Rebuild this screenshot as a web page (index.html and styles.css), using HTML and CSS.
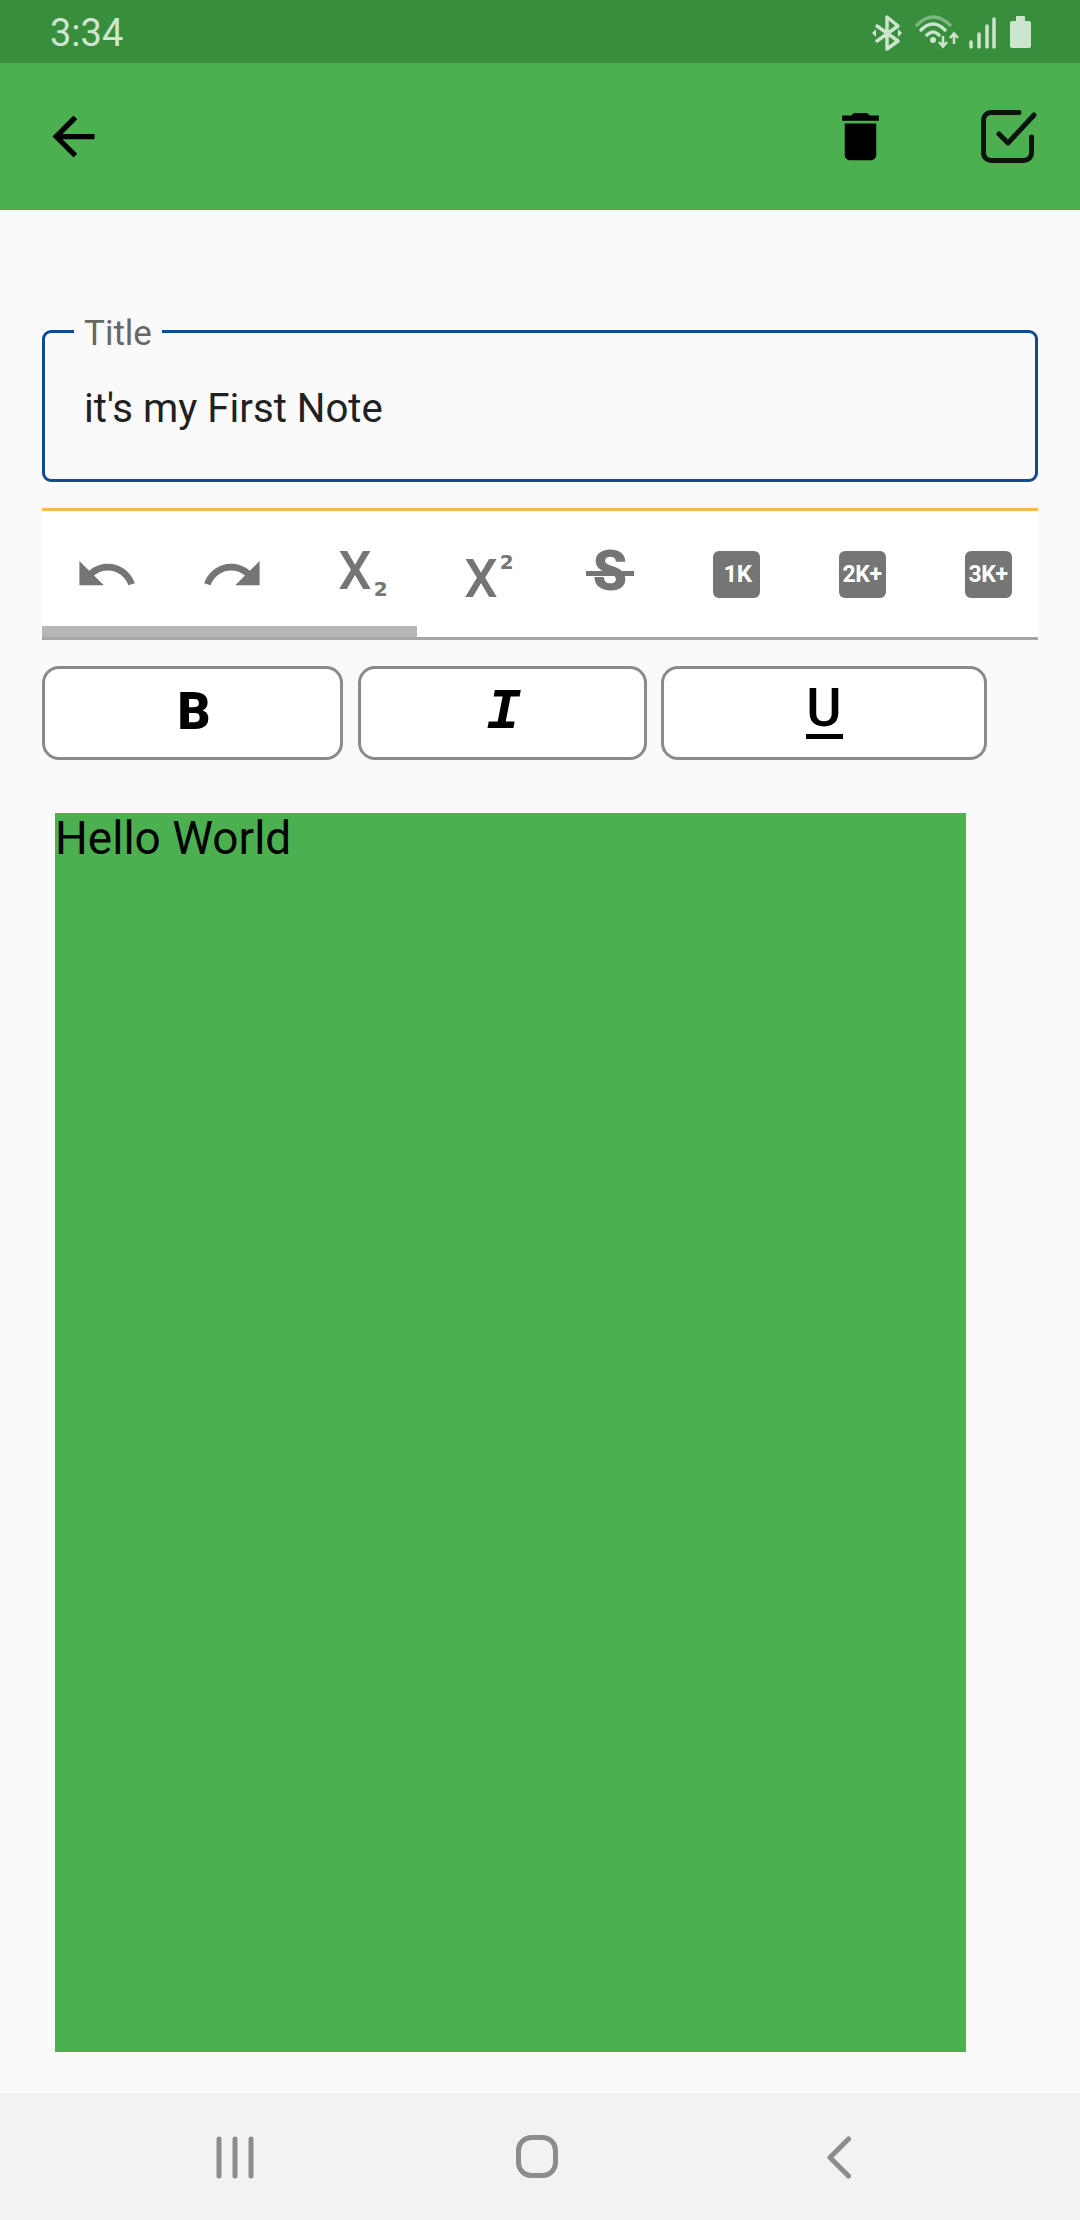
FILE: index.html
```html
<!DOCTYPE html>
<html lang="en">
<head>
<meta charset="utf-8">
<title>Note editor</title>
<link rel="stylesheet" href="styles.css">
</head>
<body>
<header class="status-bar">
  <span class="time">3:34</span>
  <svg class="status-icons" viewBox="865 10 170 40" width="170" height="40">
    <path class="st-line" d="M877 24L898 39L887 47V15L898 24L877 39"/>
    <path class="st-fill" d="M872 31l4-4v8zM902 31l-4-4v8z"/>
    <path class="st-faint" d="M917 23Q933 7 950 23"/>
    <path class="st-line" d="M921 28Q933 16 945 28M927 33Q933 27 939 33"/>
    <circle class="st-fill" cx="933" cy="38" r="3"/>
    <path class="st-arrow" d="M943 34V44M939 40L943 44.500L947 40M954 42V32M950 36L954 31.500L958 36"/>
    <path class="st-bar" d="M971 40V45M979 32V45M987 24V45M994 17V45"/>
    <path class="st-fill" d="M1016 15a1 1 0 0 1 1-1h7a1 1 0 0 1 1 1v4h4a2 2 0 0 1 2 2v23a2 2 0 0 1-2 2h-17a2 2 0 0 1-2-2V21a2 2 0 0 1 2-2h4z"/>
  </svg>
</header>

<nav class="app-bar">
  <svg class="bar-icon" viewBox="0 0 24 24"><path d="M20 11H7.830l5.590-5.590L12 4l-8 8 8 8 1.410-1.410L7.830 13H20v-2z"/></svg>
  <svg class="bar-icon trash" viewBox="0 0 24 24"><path d="M6 19c0 1.100.9 2 2 2h8c1.100 0 2-.9 2-2V7H6v12zM19 4h-3.500l-1-1h-5l-1 1H5v2h14V4z"/></svg>
  <svg class="check-icon" viewBox="0 0 64 64"><path d="M43 7.500H15a7.500 7.500 0 0 0-7.500 7.500v33a7.500 7.500 0 0 0 7.500 7.500h33a7.500 7.500 0 0 0 7.500-7.500V32"/><path d="M23 29l9 9 26-28"/></svg>
</nav>

<main class="content">
  <div class="title-field">
    <span class="title-label">Title</span>
    <span class="title-value">it's my First Note</span>
  </div>

  <div class="toolbar">
    <div class="tool"><svg class="tool-icon" viewBox="0 0 24 24"><path d="M12.500 8c-2.650 0-5.050.99-6.900 2.600L2 7v9h9l-3.620-3.620c1.390-1.160 3.160-1.880 5.120-1.880 3.540 0 6.550 2.310 7.600 5.500l2.370-.78C21.080 11.030 17.150 8 12.500 8z"/></svg></div>
    <div class="tool"><svg class="tool-icon" viewBox="0 0 24 24"><path d="M18.400 10.600C16.550 8.990 14.150 8 11.500 8c-4.650 0-8.580 3.030-9.960 7.220L3.900 16c1.050-3.190 4.050-5.500 7.600-5.500 1.950 0 3.730.72 5.120 1.880L13 16h9V7l-3.600 3.600z"/></svg></div>
    <div class="tool"><span class="script sub-form">X<small class="script-digit">2</small></span></div>
    <div class="tool"><span class="script sup-form">X<small class="script-digit">2</small></span></div>
    <div class="tool"><span class="strike">S</span></div>
    <div class="tool"><span class="badge badge-one">1K</span></div>
    <div class="tool"><span class="badge">2K+</span></div>
    <div class="tool"><span class="badge">3K+</span></div>
    <div class="scroll-thumb"></div>
  </div>

  <div class="format-row">
    <button class="format-btn btn-bold">B</button>
    <button class="format-btn btn-italic">I</button>
    <button class="format-btn btn-underline"><span class="u-mark">U</span></button>
  </div>

  <div class="editor">Hello World</div>
</main>

<footer class="nav-bar">
  <svg class="nav-icon" viewBox="0 0 60 44"><path d="M14 4V41M30 4V41M46 4V41"/></svg>
  <svg class="nav-icon" viewBox="0 0 60 44"><rect x="11.500" y="2.500" width="37" height="38" rx="13"/></svg>
  <svg class="nav-icon" viewBox="0 0 60 44"><path d="M39.500 4L21 22.500L39.500 41" class="nav-chevron"/></svg>
</footer>
</body>
</html>
```

FILE: styles.css
```css
* { box-sizing: border-box; }

html, body {
  margin: 0;
  height: 2220px;
  overflow: hidden;
}

body {
  display: flex;
  flex-direction: column;
  background: #fafafa;
  font-family: Roboto, "Liberation Sans", sans-serif;
}

.status-bar {
  flex: none;
  height: 63px;
  display: flex;
  align-items: center;
  padding: 0 45px 0 50px;
  background: #388e3c;
}

.time {
  font-size: 38px;
  line-height: 1;
  color: #cfe6d0;
  position: relative;
  top: 1px;
}

.status-icons {
  margin-left: auto;
  display: block;
}

.st-line, .st-faint, .st-arrow, .st-bar {
  fill: none;
  stroke: #cde4cf;
}
.st-line { stroke-width: 3.500; stroke-linecap: round; stroke-linejoin: round; }
.st-faint { stroke-width: 3.500; stroke: #7db880; stroke-linecap: round; }
.st-arrow { stroke-width: 2.500; }
.st-bar { stroke-width: 3.500; stroke-linecap: round; }
.st-fill { fill: #cde4cf; }

.app-bar {
  flex: none;
  height: 147px;
  display: flex;
  align-items: center;
  padding: 0 40px 0 42px;
  background: #4caf50;
}

.bar-icon {
  width: 63px;
  height: 63px;
  display: block;
  fill: #000;
}

.trash { margin-left: auto; }

.check-icon {
  width: 64px;
  height: 64px;
  margin-left: 84px;
  display: block;
  fill: none;
  stroke: #0b130d;
  stroke-width: 5;
  stroke-linecap: round;
  stroke-linejoin: round;
}

.content {
  flex: 1;
  padding: 120px 42px 0;
  display: flex;
  flex-direction: column;
}

.title-field {
  position: relative;
  height: 152px;
  display: flex;
  align-items: center;
  padding: 5px 0 0 39px;
  border: 3px solid #134a94;
  border-radius: 9px;
}

.title-label {
  position: absolute;
  left: 29px;
  top: -19px;
  padding: 0 10px;
  background: #fafafa;
  font-size: 35px;
  line-height: 40px;
  color: #666;
}

.title-value {
  font-size: 40.200px;
  color: #212121;
}

.toolbar {
  position: relative;
  margin-top: 26px;
  height: 132px;
  display: flex;
  overflow: hidden;
  padding-left: 1px;
  background: #fff;
  border-top: 3px solid #f4b94c;
  border-bottom: 3px solid #a5a5a5;
}

.tool {
  flex: none;
  width: 126px;
  height: 126px;
  display: flex;
  align-items: center;
  justify-content: center;
}

.tool-icon {
  width: 65px;
  height: 65px;
  display: block;
  fill: #757575;
}

.script {
  display: flex;
  font-size: 53px;
  font-weight: 500;
  line-height: 37px;
  color: #757575;
}

.script-digit {
  font-family: "DejaVu Sans", sans-serif;
  font-size: 20px;
  font-weight: 700;
  line-height: 13px;
  margin-left: 2px;
}

.sub-form { margin-top: -6px; margin-left: 10px; }
.sub-form .script-digit { position: relative; top: 30px; }
.sup-form { margin-top: 10px; margin-left: 10px; }
.sup-form .script-digit { position: relative; top: -5px; }

.strike {
  position: relative;
  font-size: 55px;
  font-weight: 900;
  line-height: 40px;
  color: #757575;
  margin-top: -7px;
}

.strike::after {
  content: "";
  position: absolute;
  left: -7px;
  right: -7px;
  top: 20px;
  height: 5px;
  background: #757575;
}

.badge {
  width: 47px;
  height: 47px;
  display: flex;
  align-items: center;
  justify-content: center;
  border-radius: 6px;
  background: #757575;
  color: #fff;
  font-size: 23px;
  font-weight: 700;
  letter-spacing: -0.5px;
  white-space: nowrap;
}

.badge-one {
  font-size: 24px;
  padding-left: 3px;
}

.scroll-thumb {
  position: absolute;
  left: 0;
  bottom: 0;
  width: 375px;
  height: 11px;
  background: #b6b6b6;
}

.format-row {
  margin-top: 26px;
  display: flex;
  gap: 15px;
}

.format-btn {
  height: 94px;
  padding: 0;
  display: flex;
  align-items: center;
  justify-content: center;
  background: #fff;
  border: 3px solid #8a8a8a;
  border-radius: 17px;
  color: #000;
  font-family: Roboto, sans-serif;
  font-size: 53px;
  line-height: 1;
}

.btn-bold {
  width: 301px;
  padding: 0 0 3px 3px;
  font-size: 51px;
  font-weight: 900;
}
.btn-italic {
  width: 289px;
  padding-left: 2px;
  font-family: "Liberation Mono", monospace;
  font-size: 58px;
  font-style: italic;
  font-weight: 700;
}
.btn-underline {
  width: 326px;
  margin-left: -1px;
  font-weight: 500;
}

.u-mark {
  display: block;
  width: 37px;
  height: 49px;
  font-size: 54px;
  line-height: 36px;
  text-align: center;
  border-bottom: 5px solid #000;
  margin-top: 2px;
}

.editor {
  margin: 53px 0 41px 13px;
  width: 911px;
  flex: 1;
  background: #4caf50;
  color: #000;
  font-size: 46px;
  line-height: 50px;
}

.nav-bar {
  flex: none;
  height: 127px;
  display: flex;
  align-items: center;
  justify-content: center;
  gap: 242px;
  padding-right: 6px;
  background: #f2f2f2;
}

.nav-icon {
  width: 60px;
  height: 44px;
  display: block;
  fill: none;
  stroke: #8c8c8c;
  stroke-width: 5;
  stroke-linecap: round;
  stroke-linejoin: round;
}
```
